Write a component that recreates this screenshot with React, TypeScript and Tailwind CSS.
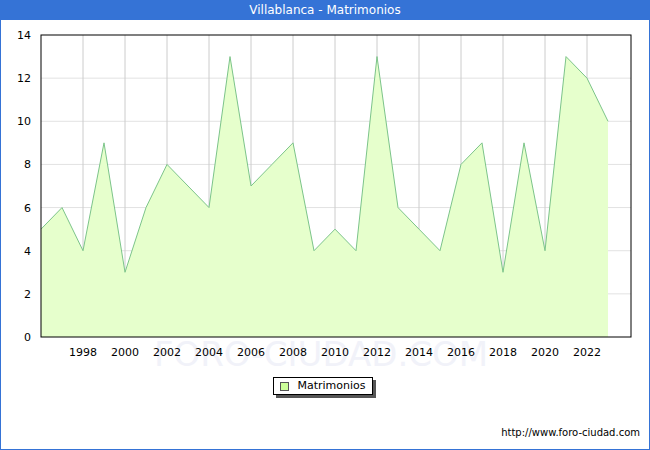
const data = [5, 6, 4, 9, 3, 6, 8, 7, 6, 13, 7, 8, 9, 4, 5, 4, 13, 6, 5, 4, 8, 9, 3, 9, 4, 13, 12, 10];

const X0 = 40;
const DX = 21;
const TOP = 15;
const BOT = 317;
const yOf = (v: number) => BOT - (v / 14) * (BOT - TOP);
const xOf = (i: number) => X0 + i * DX;

function Chart() {
  const pts = data.map((v, i) => `${xOf(i)},${yOf(v)}`).join(' ');
  const area = `${xOf(0)},${BOT} ${pts} ${xOf(data.length - 1)},${BOT}`;
  return (
    <svg width={648} height={352} className="block" style={{ fontFamily: 'DejaVu Sans, sans-serif' }}>
      <text x={320} y={346} textAnchor="middle" fontSize={34} fill="#f1f2f9">FORO-CIUDAD.COM</text>
      {[2, 4, 6, 8, 10, 12].map((v) => (
        <line key={v} x1={X0} x2={630} y1={yOf(v)} y2={yOf(v)} stroke="#e2e2e2" />
      ))}
      {Array.from({ length: 13 }, (_, k) => xOf(2 + k * 2)).map((x) => (
        <line key={x} x1={x} x2={x} y1={TOP} y2={BOT} stroke="#cccccc" />
      ))}
      <polygon points={area} fill="#e6ffcc" />
      <polyline points={pts} fill="none" stroke="#7cc48a" strokeWidth={1} />
      <rect x={X0} y={TOP} width={590} height={BOT - TOP} fill="none" stroke="#000" />
      {[0, 2, 4, 6, 8, 10, 12, 14].map((v) => (
        <text key={v} x={30} y={yOf(v) + 4} textAnchor="end" fontSize={11} fill="#000">{v}</text>
      ))}
      {Array.from({ length: 13 }, (_, k) => 1998 + k * 2).map((yr, k) => (
        <text key={yr} x={xOf(2 + k * 2)} y={336} textAnchor="middle" fontSize={11} fill="#000">{yr}</text>
      ))}
    </svg>
  );
}

export default function App() {
  return (
    <div className="w-[650px] h-[450px] border border-[#3573d6] bg-white flex flex-col" style={{ fontFamily: 'DejaVu Sans, sans-serif' }}>
      <div className="h-[20px] shrink-0 bg-[#3573d6] text-white text-[12px] flex items-center justify-center -mx-px -mt-px">
        Villablanca - Matrimonios
      </div>
      <Chart />
      <div className="flex justify-center mt-[5px] pr-[4px]">
        <div className="flex items-center gap-[8px] h-[18px] px-[6px] border border-black bg-white text-[11px] shadow-[3px_3px_0_#555]">
          <span className="w-[9px] h-[9px] border border-[#555] bg-[#ccff99]" />
          <span>Matrimonios</span>
        </div>
      </div>
      <div className="flex-1" />
      <div className="text-right text-[10px] pr-[9px] pb-[9px]">http://www.foro-ciudad.com</div>
    </div>
  );
}
